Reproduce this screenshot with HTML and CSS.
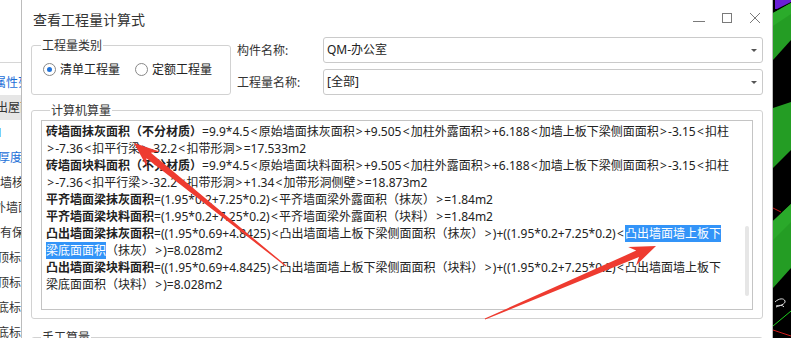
FILE: index.html
```html
<!DOCTYPE html>
<html lang="zh-CN">
<head>
    <meta charset="UTF-8">
    <title>查看工程量计算式</title>
    <link rel="stylesheet" href="styles.css">
</head>
<body>
    <div class="screen">
        <!-- app behind the dialog, only a thin strip shows -->
        <aside class="side-panel">
            <div class="side-top"></div>
            <div class="side-item blue indent-6">属性列</div>
            <div class="side-item active indent-4">出屋面</div>
            <div class="side-item blue indent-4">1</div>
            <div class="side-item blue indent-2">厚度</div>
            <div class="side-item">墙核</div>
            <div class="side-item indent-6">外墙面</div>
            <div class="side-item">有保</div>
            <div class="side-item indent-3">顶标</div>
            <div class="side-item indent-3">顶标</div>
            <div class="side-item indent-3">底标</div>
            <div class="side-item indent-3">底标</div>
        </aside>

        <div class="dialog">
            <div class="title-bar">
                <span class="title">查看工程量计算式</span>
                <div class="win-btns">
                    <svg width="14" height="14" viewBox="0 0 14 14"><path d="M1 9.5h12" stroke="#7a7a7a" stroke-width="1"/></svg>
                    <svg width="14" height="14" viewBox="0 0 14 14"><rect x="2.5" y="1.5" width="9" height="9" fill="none" stroke="#7a7a7a"/></svg>
                    <svg width="14" height="14" viewBox="0 0 14 14"><path d="M2 1l10 10M12 1L2 11" stroke="#7a7a7a" stroke-width="1"/></svg>
                </div>
            </div>

            <div class="top-row">
                <fieldset class="group type-group">
                    <legend>工程量类别</legend>
                    <div class="radio-row">
                        <label class="radio"><span class="radio-dot checked"></span>清单工程量</label>
                        <label class="radio"><span class="radio-dot"></span>定额工程量</label>
                    </div>
                </fieldset>
                <div class="fields">
                    <span class="field-label">构件名称:</span>
                    <div class="combo">QM-办公室<span class="caret"></span></div>
                    <span class="field-label">工程量名称:</span>
                    <div class="combo">[全部]<span class="caret"></span></div>
                </div>
            </div>

            <fieldset class="group calc-group">
                <legend>计算机算量</legend>
                <div class="result-box">
                    <div class="result-text">
                        <div class="line"><b>砖墙面抹灰面积（不分材质）</b>=9.9*4.5<span class="br">&lt;</span>原始墙面抹灰面积<span class="br">&gt;</span>+9.505<span class="br">&lt;</span>加柱外露面积<span class="br">&gt;</span>+6.188<span class="br">&lt;</span>加墙上板下梁侧面面积<span class="br">&gt;</span>-3.15<span class="br">&lt;</span>扣柱</div>
                        <div class="line"><span class="br">&gt;</span>-7.36<span class="br">&lt;</span>扣平行梁<span class="br">&gt;</span>-32.2<span class="br">&lt;</span>扣带形洞<span class="br">&gt;</span>=17.533m2</div>
                        <div class="line"><b>砖墙面块料面积（不分材质）</b>=9.9*4.5<span class="br">&lt;</span>原始墙面块料面积<span class="br">&gt;</span>+9.505<span class="br">&lt;</span>加柱外露面积<span class="br">&gt;</span>+6.188<span class="br">&lt;</span>加墙上板下梁侧面面积<span class="br">&gt;</span>-3.15<span class="br">&lt;</span>扣柱</div>
                        <div class="line"><span class="br">&gt;</span>-7.36<span class="br">&lt;</span>扣平行梁<span class="br">&gt;</span>-32.2<span class="br">&lt;</span>扣带形洞<span class="br">&gt;</span>+1.34<span class="br">&lt;</span>加带形洞侧壁<span class="br">&gt;</span>=18.873m2</div>
                        <div class="line"><b>平齐墙面梁抹灰面积</b>=(1.95*0.2+7.25*0.2)<span class="br">&lt;</span>平齐墙面梁外露面积（抹灰）<span class="br">&gt;</span>=1.84m2</div>
                        <div class="line"><b>平齐墙面梁块料面积</b>=(1.95*0.2+7.25*0.2)<span class="br">&lt;</span>平齐墙面梁外露面积（块料）<span class="br">&gt;</span>=1.84m2</div>
                        <div class="line"><b>凸出墙面梁抹灰面积</b>=((1.95*0.69+4.8425)<span class="br">&lt;</span>凸出墙面墙上板下梁侧面面积（抹灰）<span class="br">&gt;</span>)+((1.95*0.2+7.25*0.2)<span class="br">&lt;</span><span class="sel">凸出墙面墙上板下</span></div>
                        <div class="line"><span class="sel">梁底面面积</span>（抹灰）<span class="br">&gt;</span>)=8.028m2</div>
                        <div class="line"><b>凸出墙面梁块料面积</b>=((1.95*0.69+4.8425)<span class="br">&lt;</span>凸出墙面墙上板下梁侧面面积（块料）<span class="br">&gt;</span>)+((1.95*0.2+7.25*0.2)<span class="br">&lt;</span>凸出墙面墙上板下</div>
                        <div class="line">梁底面面积（块料）<span class="br">&gt;</span>)=8.028m2</div>
                    </div>
                    <div class="scroll-track"></div>
                </div>
            </fieldset>

            <fieldset class="group manual-group">
                <legend>手工算量</legend>
            </fieldset>
        </div>

        <!-- 3d view behind the dialog -->
        <div class="viewport">
            <svg width="18" height="338" viewBox="0 0 18 338">
                <rect width="18" height="338" fill="#000"/>
                <polygon points="2,0 18,0 18,2 4,9 2,9" fill="#6a1fd6"/>
                <polygon points="0,13 18,3 18,40 0,60" fill="#249d24"/>
                <polygon points="0,13 18,3 18,14 0,26" fill="#2bab2b"/>
                <polygon points="0,108 18,102 18,150 0,168" fill="#249d24"/>
                <polygon points="0,221 18,204 18,268 0,288" fill="#249d24"/>
                <polygon points="0,221 18,204 18,222 0,240" fill="#2aa92a"/>
                <path d="M0 208l8 4" stroke="#c01818" stroke-width="1"/>
                <path d="M2 302c4-4 9-4 10-1s-6 5-9 6M3 306c3-1 7-1 8 1" stroke="#ddd" stroke-width="1" fill="none"/>
                <path d="M0 326L18 311" stroke="#1fd01f" stroke-width="1"/>
                <path d="M0 330l18 6" stroke="#d01c1c" stroke-width="1"/>
            </svg>
        </div>
    </div>

    <!-- red annotation arrows drawn on top of the screenshot -->
    <svg class="arrows" width="791" height="338" viewBox="0 0 791 338">
        <polygon fill="#ee3b30" points="286.3,265.6 150.8,152.8 159.5,151.5 134,143 147.0,167.1 146.4,158.2 285.7,266.4"/>
        <polygon fill="#ee3b30" points="485.2,319.5 639.0,257.1 636.0,265.4 656,246 628.2,247.0 636.2,250.6 484.8,318.5"/>
    </svg>
</body>
</html>
```

FILE: styles.css
```css
body {
    margin: 0;
    font-family: "Noto Sans", "Noto Sans CJK SC", sans-serif;
    font-size: 12px;
    color: #222;
    background: #fff;
    overflow: hidden;
}

.screen {
    display: flex;
    width: 791px;
    height: 338px;
    overflow: hidden;
}

/* background app strip */
.side-panel {
    width: 21px;
    flex-shrink: 0;
    overflow: hidden;
    white-space: nowrap;
    background: #fff;
}

.side-top {
    height: 62px;
    border-bottom: 1px solid #d6d6d6;
    margin-bottom: 7px;
}

.side-item {
    height: 25px;
    line-height: 25px;
    font-size: 12px;
    color: #333;
}

.side-item.blue {
    color: #1c6fd8;
}

.side-item.active {
    background: #e6e6e6;
}

.indent-2 { text-indent: -2px; }
.indent-3 { text-indent: -3px; }
.indent-4 { text-indent: -4px; }
.indent-6 { text-indent: -6px; }

/* dialog */
.dialog {
    width: 752px;
    flex-shrink: 0;
    box-sizing: border-box;
    border-left: 1px solid #bcbcbc;
    border-right: 1px solid #bcbcbc;
    background: #fff;
    padding: 0 9px;
}

.title-bar {
    height: 37px;
    display: flex;
    align-items: center;
    justify-content: space-between;
}

.title {
    font-size: 14px;
    color: #333;
    margin-left: 2px;
}

.win-btns {
    display: flex;
    gap: 14px;
    margin-right: 1px;
    margin-top: 1px;
}

.top-row {
    display: flex;
    gap: 6px;
    height: 58px;
}

.group {
    margin: 0;
    border: 1px solid #d2d2d2;
    border-radius: 3px;
    padding: 0;
    min-width: 0;
}

.group legend {
    margin-left: 9px;
    padding: 0 1px;
    line-height: 17px;
    color: #333;
}

.type-group {
    width: 200px;
    box-sizing: border-box;
    height: 58px;
}

.radio-row {
    display: flex;
    gap: 15px;
    padding: 7px 0 0 11px;
    line-height: 17px;
}

.radio {
    display: flex;
    align-items: center;
    gap: 4px;
}

.radio-dot {
    width: 11px;
    height: 11px;
    border: 1px solid #888;
    border-radius: 50%;
    display: flex;
    align-items: center;
    justify-content: center;
    background: #fff;
}

.radio-dot.checked::after {
    content: "";
    width: 5px;
    height: 5px;
    border-radius: 50%;
    background: #2173d9;
}

.fields {
    flex: 1;
    display: grid;
    grid-template-columns: 86px 1fr;
    grid-auto-rows: 26px;
    row-gap: 6px;
    align-items: center;
}

.field-label {
    color: #333;
}

.combo {
    height: 26px;
    box-sizing: border-box;
    border: 1px solid #cacaca;
    border-radius: 3px;
    padding: 0 3px;
    line-height: 24px;
    display: flex;
    justify-content: space-between;
    align-items: center;
    color: #222;
}

.caret {
    width: 0;
    height: 0;
    border-left: 3px solid transparent;
    border-right: 3px solid transparent;
    border-top: 3px solid #555;
    margin-right: 2px;
}

.calc-group {
    margin-top: 7px;
    padding: 1px 9px 8px;
}

.result-box {
    height: 190px;
    box-sizing: border-box;
    border: 1px solid #c4c4c4;
    display: flex;
}

.result-text {
    flex: 1;
    padding: 2px 0 0 4px;
    white-space: nowrap;
    overflow: hidden;
}

.line {
    height: 17px;
    line-height: 17px;
}

.line b {
    font-weight: bold;
}

/* the angle brackets sit wider in the original font */
.br {
    padding: 0 1.2px;
}

.sel {
    background: #3394f8;
    color: #fff;
}

.scroll-track {
    width: 4px;
    height: 70px;
    align-self: flex-end;
    margin: 0 3px 13px 0;
    background: #e6e6e6;
    border-radius: 2px;
}

.manual-group {
    margin-top: 10px;
    height: 40px;
}

.viewport {
    width: 18px;
    flex-shrink: 0;
    background: #000;
}

.arrows {
    position: absolute;
    top: 0;
    left: 0;
    pointer-events: none;
}
```
